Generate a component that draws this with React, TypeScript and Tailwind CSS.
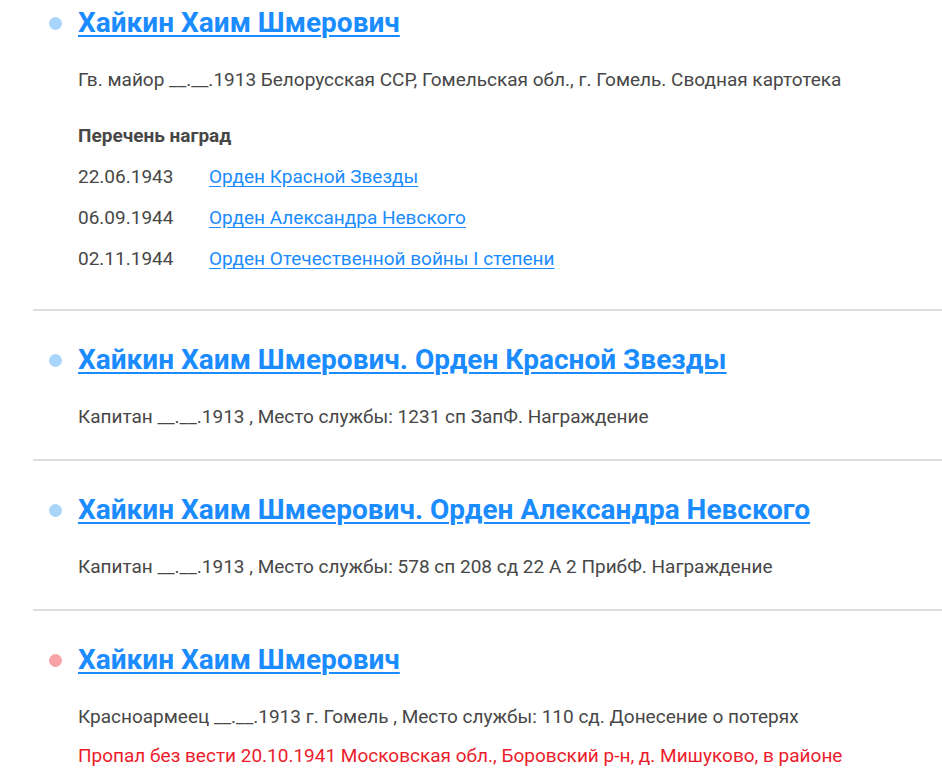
import React from 'react'

type Award = { date: string; title: string }

type Entry = {
  dot: 'blue' | 'red'
  title: string
  lines: { text: string; red?: boolean }[]
  awards?: Award[]
}

const entries: Entry[] = [
  {
    dot: 'blue',
    title: 'Хайкин Хаим Шмерович',
    lines: [{ text: 'Гв. майор __.__.1913 Белорусская ССР, Гомельская обл., г. Гомель. Сводная картотека' }],
    awards: [
      { date: '22.06.1943', title: 'Орден Красной Звезды' },
      { date: '06.09.1944', title: 'Орден Александра Невского' },
      { date: '02.11.1944', title: 'Орден Отечественной войны I степени' },
    ],
  },
  {
    dot: 'blue',
    title: 'Хайкин Хаим Шмерович. Орден Красной Звезды',
    lines: [{ text: 'Капитан __.__.1913 , Место службы: 1231 сп ЗапФ. Награждение' }],
  },
  {
    dot: 'blue',
    title: 'Хайкин Хаим Шмеерович. Орден Александра Невского',
    lines: [{ text: 'Капитан __.__.1913 , Место службы: 578 сп 208 сд 22 А 2 ПрибФ. Награждение' }],
  },
  {
    dot: 'red',
    title: 'Хайкин Хаим Шмерович',
    lines: [
      { text: 'Красноармеец __.__.1913 г. Гомель , Место службы: 110 сд. Донесение о потерях' },
      { text: 'Пропал без вести 20.10.1941 Московская обл., Боровский р-н, д. Мишуково, в районе', red: true },
    ],
  },
]

const ResultItem: React.FC<{ entry: Entry; first: boolean; last: boolean }> = ({ entry, first, last }) => {
  return (
    <div
      className={`flex ${first ? 'pt-[3px] pb-[38px]' : 'pt-[29px] pb-[30px]'} ${
        last ? '' : 'border-b-2 border-[#dddddd]'
      }`}
    >
      <div className="w-[45px] shrink-0 h-[40px] flex items-center pl-[16px]">
        <span
          className={`block w-[13px] h-[13px] rounded-full ${
            entry.dot === 'red' ? 'bg-[#f8a3a7]' : 'bg-[#aad5fb]'
          }`}
        />
      </div>
      <div className="min-w-0">
        <a
          href="#"
          className="block text-[28px] leading-[40px] font-bold text-[#1a8cff] underline decoration-2 underline-offset-[3px] whitespace-nowrap"
        >
          {entry.title}
        </a>
        <div className="mt-[25px] flex flex-col gap-[15px]">
          {entry.lines.map((l, i) => (
            <p
              key={i}
              className={`text-[19px] leading-[24px] whitespace-nowrap ${
                l.red ? 'text-[#ec1c2b]' : 'text-[#474747]'
              }`}
            >
              {l.text}
            </p>
          ))}
        </div>
        {entry.awards && (
          <div className="mt-[32px]">
            <p className="text-[19px] leading-[24px] font-bold text-[#474747]">Перечень наград</p>
            <div className="mt-[17px] flex flex-col gap-[17px]">
              {entry.awards.map((a) => (
                <div key={a.date} className="flex text-[19px] leading-[24px]">
                  <span className="w-[131px] shrink-0 text-[#474747]">{a.date}</span>
                  <a href="#" className="text-[#1a8cff] underline underline-offset-[3px]">
                    {a.title}
                  </a>
                </div>
              ))}
            </div>
          </div>
        )}
      </div>
    </div>
  )
}

export default function App() {
  return (
    <div className="min-h-screen bg-white pl-[33px] overflow-hidden font-['Roboto',sans-serif]">
      {entries.map((e, i) => (
        <ResultItem key={i} entry={e} first={i === 0} last={i === entries.length - 1} />
      ))}
    </div>
  )
}
